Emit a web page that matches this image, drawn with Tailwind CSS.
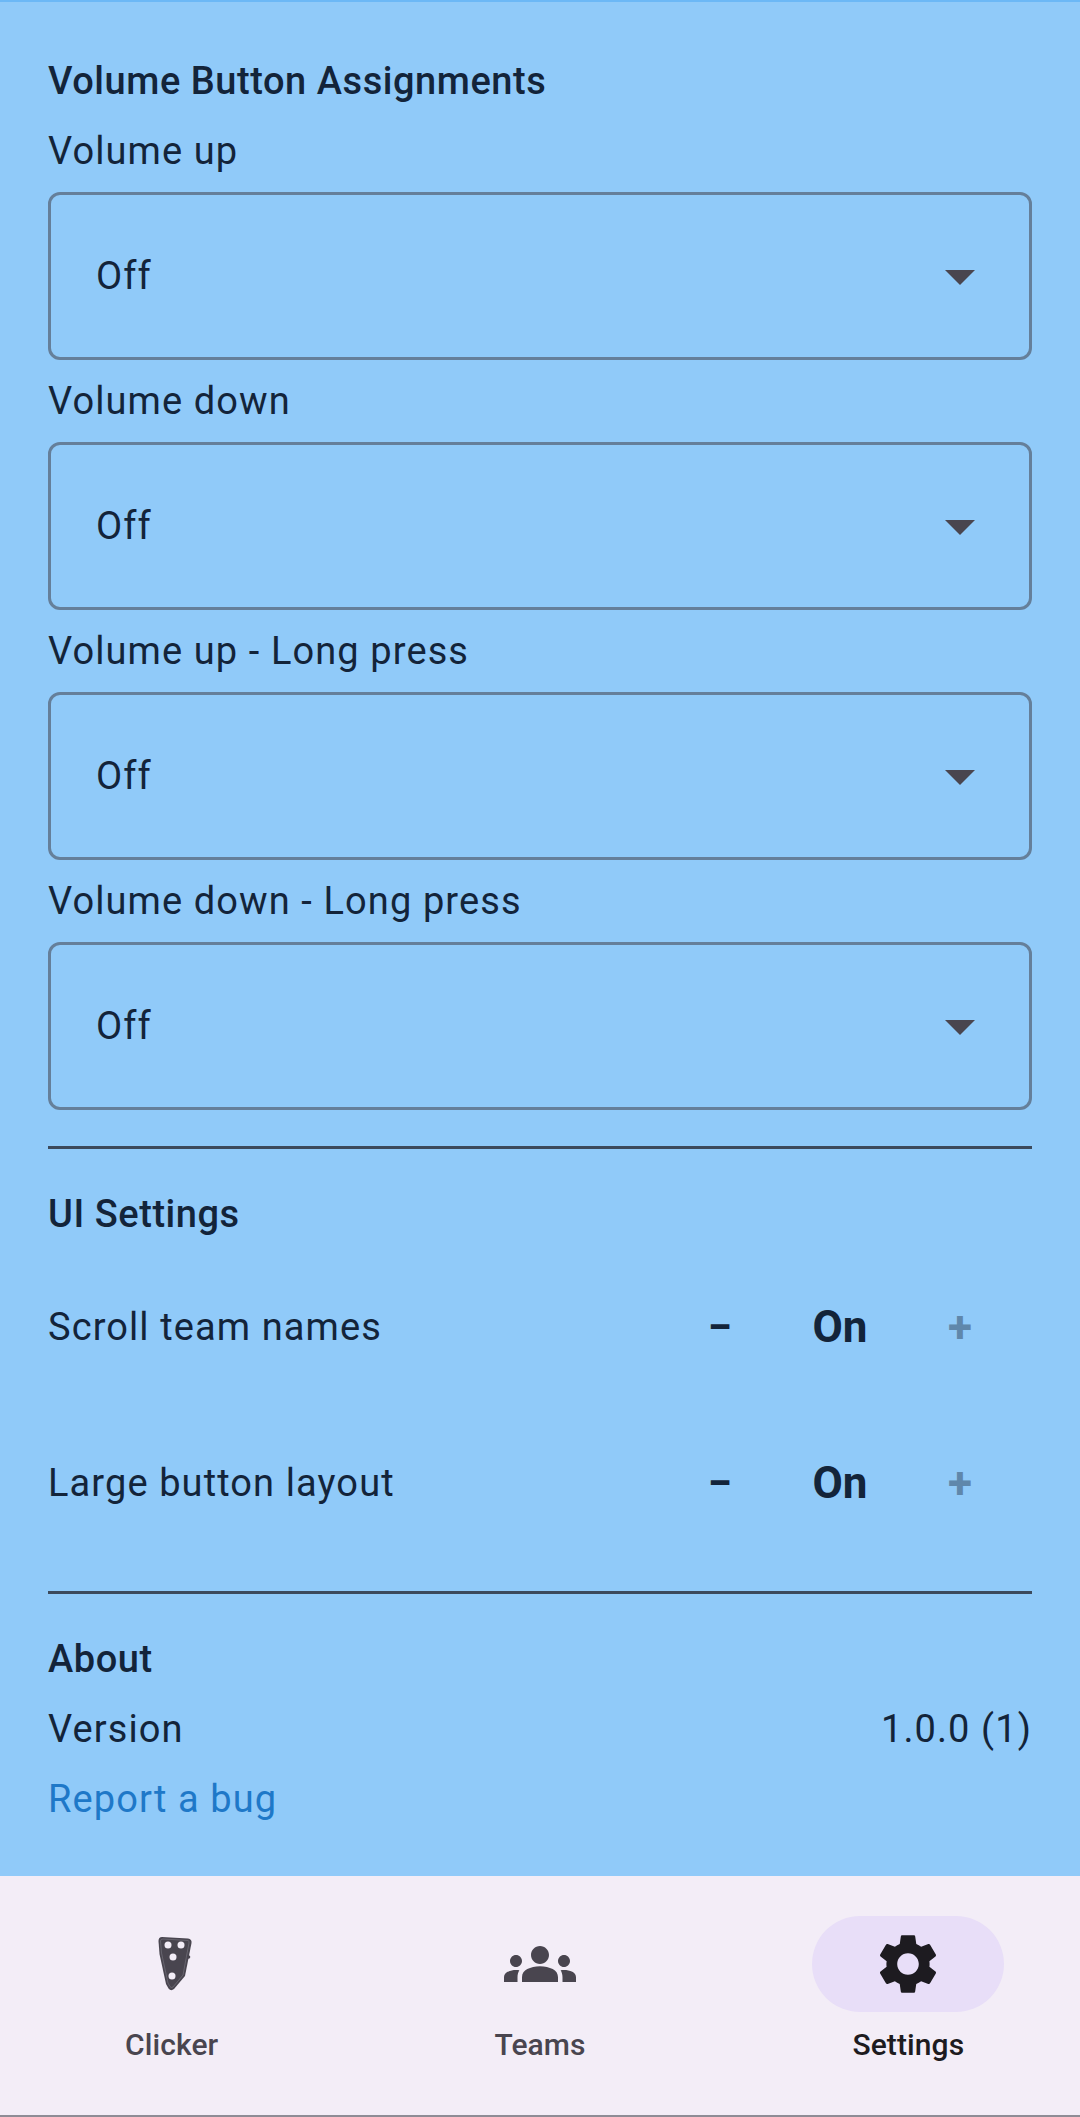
<!DOCTYPE html>
<html lang="en">

<head>
  <meta charset="UTF-8" />
  <meta name="viewport" content="width=device-width, initial-scale=1.0" />
  <script src="https://cdn.jsdelivr.net/npm/@tailwindcss/browser@4"></script>
  <title>Settings</title>
</head>

<body class="font-['Roboto',sans-serif] text-[#13243a]">
  <div class="flex flex-col w-[1080px] h-[2117px] bg-[#90caf9] border-t-2 border-[#6cb8f6]">
    <main class="flex-1 px-[48px] pt-[54px]">
      <h2 class="text-[38px] leading-[50px] font-medium tracking-[0.55px] mb-[20px]">Volume Button Assignments</h2>

      <div class="text-[38px] leading-[50px] tracking-[1.1px] mb-[16px]">Volume up</div>
      <div class="flex items-center justify-between h-[168px] mb-[16px] pl-[45px] pr-[33px] border-[3px] border-[#657f9a] rounded-[12px]">
        <span class="text-[38px] tracking-[1.1px]">Off</span>
        <svg class="w-[72px] h-[72px] fill-[#49454f]" viewBox="0 0 24 24"><path d="M7 10l5 5 5-5z" /></svg>
      </div>

      <div class="text-[38px] leading-[50px] tracking-[1.1px] mb-[16px]">Volume down</div>
      <div class="flex items-center justify-between h-[168px] mb-[16px] pl-[45px] pr-[33px] border-[3px] border-[#657f9a] rounded-[12px]">
        <span class="text-[38px] tracking-[1.1px]">Off</span>
        <svg class="w-[72px] h-[72px] fill-[#49454f]" viewBox="0 0 24 24"><path d="M7 10l5 5 5-5z" /></svg>
      </div>

      <div class="text-[38px] leading-[50px] tracking-[1.1px] mb-[16px]">Volume up - Long press</div>
      <div class="flex items-center justify-between h-[168px] mb-[16px] pl-[45px] pr-[33px] border-[3px] border-[#657f9a] rounded-[12px]">
        <span class="text-[38px] tracking-[1.1px]">Off</span>
        <svg class="w-[72px] h-[72px] fill-[#49454f]" viewBox="0 0 24 24"><path d="M7 10l5 5 5-5z" /></svg>
      </div>

      <div class="text-[38px] leading-[50px] tracking-[1.1px] mb-[16px]">Volume down - Long press</div>
      <div class="flex items-center justify-between h-[168px] pl-[45px] pr-[33px] border-[3px] border-[#657f9a] rounded-[12px]">
        <span class="text-[38px] tracking-[1.1px]">Off</span>
        <svg class="w-[72px] h-[72px] fill-[#49454f]" viewBox="0 0 24 24"><path d="M7 10l5 5 5-5z" /></svg>
      </div>

      <hr class="mt-[36px] mb-[40px] border-t-[3px] border-[#3c4a5c]" />

      <h2 class="text-[38px] leading-[50px] font-medium tracking-[0.55px] mb-[10px]">UI Settings</h2>

      <div class="flex items-center justify-between h-[156px]">
        <span class="text-[38px] tracking-[1.1px]">Scroll team names</span>
        <div class="flex items-center mr-[12px] font-bold text-[44px] leading-[50px] text-center">
          <span class="w-[120px]">−</span>
          <span class="w-[120px]">On</span>
          <span class="w-[120px] text-[#5f87ab]">+</span>
        </div>
      </div>
      <div class="flex items-center justify-between h-[156px]">
        <span class="text-[38px] tracking-[1.1px]">Large button layout</span>
        <div class="flex items-center mr-[12px] font-bold text-[44px] leading-[50px] text-center">
          <span class="w-[120px]">−</span>
          <span class="w-[120px]">On</span>
          <span class="w-[120px] text-[#5f87ab]">+</span>
        </div>
      </div>

      <hr class="mt-[30px] mb-[40px] border-t-[3px] border-[#3c4a5c]" />

      <h2 class="text-[38px] leading-[50px] font-medium tracking-[0.55px] mb-[20px]">About</h2>
      <div class="flex justify-between text-[38px] leading-[50px] tracking-[1.1px] mb-[20px]">
        <span>Version</span>
        <span>1.0.0 (1)</span>
      </div>
      <a class="block text-[38px] leading-[50px] tracking-[1.1px] text-[#1e78c8]">Report a bug</a>
    </main>

    <nav class="grid grid-cols-3 gap-[25px] h-[241px] pt-[40px] bg-[#f3edf7] border-b-2 border-[#8e8c96] text-[30px] font-medium tracking-[0.1px] text-[#49454f]">
      <div class="flex flex-col items-center">
        <div class="flex items-center justify-center w-[192px] h-[96px]">
          <svg class="w-[72px] h-[72px]" viewBox="0 0 72 72">
            <path d="M26 9 L52 10.500 Q56 11 55.500 15 L49 48 L38 61 Q35 63.500 32.500 60.500 L30 56 L23.500 26 L22.500 13 Q22.500 9 26 9 Z" fill="#49454f" />
            <path d="M27 11 L52 12.500 Q53.500 13 53 15 L47 47 L37 59 Q35 60.500 34 58.500 L32 55 L25.500 25 L24.500 13 Q24.500 11 27 11 Z" fill="none" stroke="#6f6c76" stroke-width="0.800" />
            <circle cx="52.500" cy="29" r="1.800" fill="#49454f" />
            <circle cx="32" cy="17" r="3.500" fill="#f3edf7" />
            <circle cx="45" cy="17" r="3.500" fill="#f3edf7" />
            <circle cx="37" cy="29" r="3.500" fill="#f3edf7" />
            <circle cx="36" cy="48" r="3.500" fill="#f3edf7" />
          </svg>
        </div>
        <span class="mt-[15px] leading-[36px]">Clicker</span>
      </div>
      <div class="flex flex-col items-center">
        <div class="flex items-center justify-center w-[192px] h-[96px]">
          <svg class="w-[72px] h-[72px] fill-[#49454f]" viewBox="0 0 24 24">
            <path d="M12 12.75c1.63 0 3.07.39 4.24.9 1.08.48 1.76 1.56 1.76 2.73V18H6v-1.61c0-1.18.68-2.26 1.76-2.73 1.17-.52 2.61-.91 4.24-.91zM4 13c1.1 0 2-.9 2-2s-.9-2-2-2-2 .9-2 2 .9 2 2 2zm1.13 1.1c-.37-.06-.74-.1-1.13-.1-.99 0-1.93.21-2.78.58C.48 14.9 0 15.62 0 16.43V18h4.5v-1.61c0-.83.23-1.61.63-2.29zM20 13c1.1 0 2-.9 2-2s-.9-2-2-2-2 .9-2 2 .9 2 2 2zm4 3.43c0-.81-.48-1.53-1.22-1.85-.85-.37-1.79-.58-2.78-.58-.39 0-.76.04-1.13.1.4.68.63 1.46.63 2.29V18H24v-1.57zM12 6c1.66 0 3 1.34 3 3s-1.34 3-3 3-3-1.34-3-3 1.34-3 3-3z" />
          </svg>
        </div>
        <span class="mt-[15px] leading-[36px]">Teams</span>
      </div>
      <div class="flex flex-col items-center">
        <div class="flex items-center justify-center w-[192px] h-[96px] rounded-full bg-[#e8def8]">
          <svg class="w-[72px] h-[72px] fill-[#1d1b20]" viewBox="0 0 24 24">
            <path d="M19.14,12.94c0.04-0.3,0.06-0.61,0.06-0.94c0-0.32-0.02-0.64-0.07-0.94l2.03-1.58c0.18-0.14,0.23-0.41,0.12-0.61 l-1.92-3.32c-0.12-0.22-0.37-0.29-0.59-0.22l-2.39,0.96c-0.5-0.38-1.03-0.7-1.62-0.94L14.4,2.81c-0.04-0.24-0.24-0.41-0.48-0.41 h-3.84c-0.24,0-0.43,0.17-0.47,0.41L9.25,5.35C8.66,5.59,8.12,5.92,7.63,6.29L5.24,5.33c-0.22-0.08-0.47,0-0.59,0.22L2.74,8.87 C2.62,9.08,2.66,9.34,2.86,9.48l2.03,1.58C4.84,11.36,4.8,11.69,4.8,12s0.02,0.64,0.07,0.94l-2.03,1.58 c-0.18,0.14-0.23,0.41-0.12,0.61l1.92,3.32c0.12,0.22,0.37,0.29,0.59,0.22l2.39-0.96c0.5,0.38,1.03,0.7,1.62,0.94l0.36,2.54 c0.05,0.24,0.24,0.41,0.48,0.41h3.84c0.24,0,0.44-0.17,0.47-0.41l0.36-2.54c0.59-0.24,1.13-0.56,1.62-0.94l2.39,0.96 c0.22,0.08,0.47,0,0.59-0.22l1.92-3.32c0.12-0.22,0.07-0.47-0.12-0.61L19.14,12.94z M12,15.6c-1.98,0-3.6-1.62-3.6-3.6 s1.62-3.6,3.6-3.6s3.6,1.62,3.6,3.6S13.98,15.6,12,15.6z" />
          </svg>
        </div>
        <span class="mt-[15px] leading-[36px] text-[#1d1b20]">Settings</span>
      </div>
    </nav>
  </div>
</body>

</html>
